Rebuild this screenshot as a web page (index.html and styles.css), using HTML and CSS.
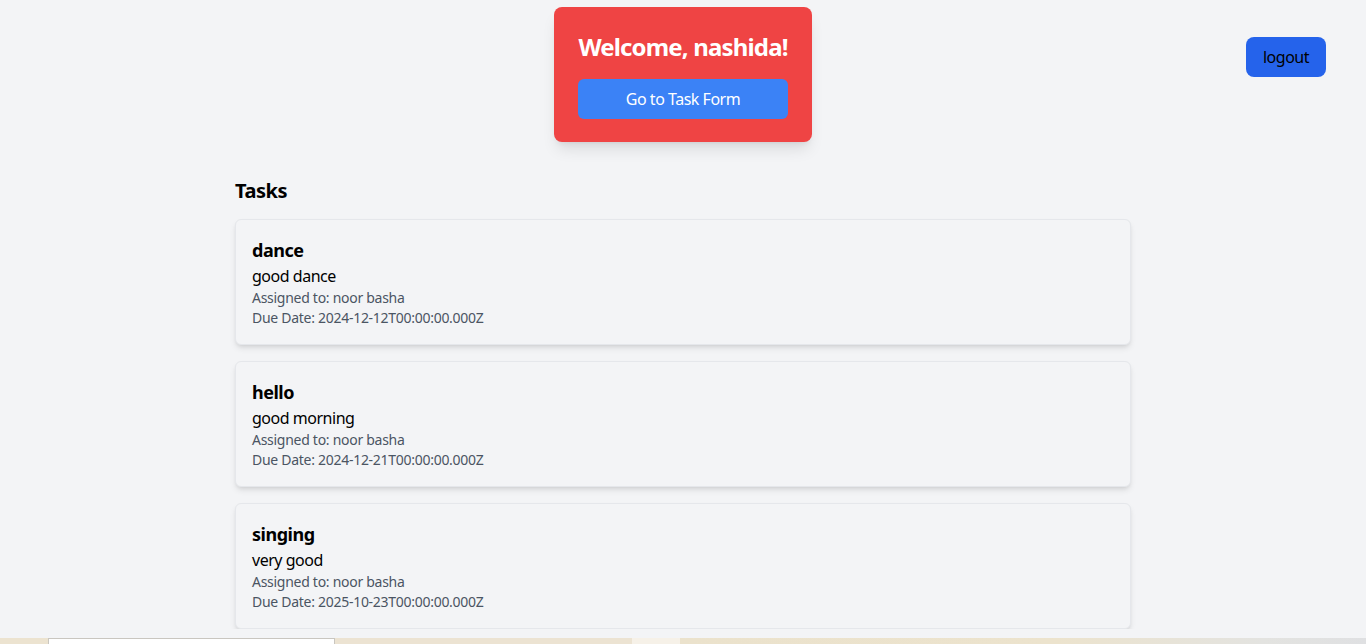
FILE: index.html
```html
<!DOCTYPE html>
<html lang="en">
<head>
<meta charset="utf-8">
<title>Dashboard</title>
<link rel="stylesheet" href="styles.css">
</head>
<body>
<div class="page">
  <header class="top">
    <div class="spacer"></div>
    <div class="welcome">
      <h1>Welcome, nashida!</h1>
      <button class="go">Go to Task Form</button>
    </div>
    <div class="right">
      <button class="logout">logout</button>
    </div>
  </header>
  <main class="tasks">
    <h2>Tasks</h2>
    <ul class="list">
      <li class="task">
        <h3>dance</h3>
        <p class="desc">good dance</p>
        <p class="meta">Assigned to: noor basha</p>
        <p class="meta">Due Date: 2024-12-12T00:00:00.000Z</p>
      </li>
      <li class="task">
        <h3>hello</h3>
        <p class="desc">good morning</p>
        <p class="meta">Assigned to: noor basha</p>
        <p class="meta">Due Date: 2024-12-21T00:00:00.000Z</p>
      </li>
      <li class="task">
        <h3>singing</h3>
        <p class="desc">very good</p>
        <p class="meta">Assigned to: noor basha</p>
        <p class="meta">Due Date: 2025-10-23T00:00:00.000Z</p>
      </li>
    </ul>
  </main>
</div>
<div class="strip">
  <span class="s1"></span><span class="s2"></span><span class="s3"></span><span class="s4"></span><span class="s5"></span>
</div>
</body>
</html>
```
FILE: styles.css
```css
* { box-sizing: border-box; }
html, body { margin: 0; padding: 0; }
body {
  background: #f3f4f6;
  font-family: "Noto Sans", "Open Sans", sans-serif;
  letter-spacing: -0.03em;
  color: #000;
}
.page { padding-top: 7px; }
.top {
  display: grid;
  grid-template-columns: 1fr auto 1fr;
  align-items: start;
}
.welcome {
  background: #ef4444;
  border-radius: 8px;
  padding: 24px 24px 23px;
  box-shadow: 0 10px 15px -3px rgba(0,0,0,0.1), 0 4px 6px -4px rgba(0,0,0,0.1);
  display: flex;
  flex-direction: column;
}
.welcome h1 {
  margin: 0;
  color: #fff;
  font-size: 24px;
  line-height: 32px;
  font-weight: 700;
  letter-spacing: -0.035em;
  text-align: center;
}
.go {
  margin-top: 16px;
  background: #3b82f6;
  color: #fff;
  border: 0;
  border-radius: 6px;
  font: inherit;
  letter-spacing: inherit;
  font-size: 16px;
  line-height: 24px;
  padding: 8px 16px;
}
.right { display: flex; justify-content: flex-end; padding-right: 40px; padding-top: 30px; }
.logout {
  background: #2563eb;
  color: #000;
  border: 0;
  border-radius: 8px;
  font: inherit;
  letter-spacing: inherit;
  font-size: 16px;
  line-height: 24px;
  padding: 8px 16px;
  width: 80px;
}
.tasks {
  max-width: 896px;
  margin: 35px auto 0;
}
.tasks h2 {
  margin: 0 0 14px;
  font-size: 20px;
  line-height: 28px;
  font-weight: 700;
}
.list { list-style: none; margin: 0; padding: 0; display: flex; flex-direction: column; gap: 16px; }
.task {
  border: 1px solid #e5e7eb;
  border-radius: 6px;
  padding: 16px;
  box-shadow: 0 4px 6px -1px rgba(0,0,0,0.1), 0 2px 4px -2px rgba(0,0,0,0.1);
  background: #f3f4f6;
}
.task h3 { margin: 0; font-size: 18px; line-height: 28px; font-weight: 700; }
.task p { margin: 0; }
.desc { font-size: 16px; line-height: 24px; }
.meta { font-size: 14px; line-height: 20px; color: #4b5563; letter-spacing: -0.02em; }
.strip {
  position: fixed;
  left: 0; right: 0; bottom: 0;
  height: 6px;
  display: flex;
}
.s1 { width: 48px; background: #ece3d0; }
.s2 { width: 287px; background: #fff; border: 1px solid #c9c6c0; border-bottom: 0; }
.s3 { width: 297px; background: #ece3d2; }
.s4 { width: 48px; background: #f6f1e8; }
.s5 { flex: 1; background: linear-gradient(90deg, #ebe2cc 0%, #ece3cd 55%, #e3e3e0 85%, #dfe0e2 100%); }
```
